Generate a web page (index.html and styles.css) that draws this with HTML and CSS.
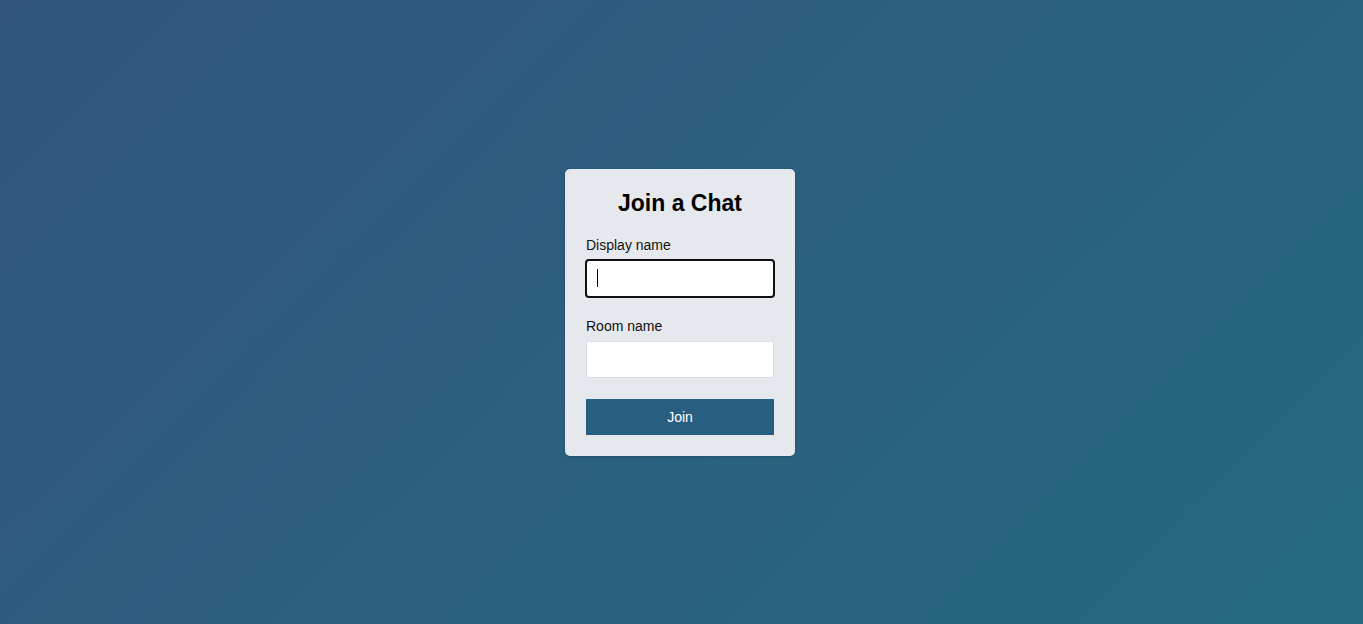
FILE: index.html
```html
<!DOCTYPE html>
<html>
<head>
    <title>Join a Chat</title>
    <link rel="stylesheet" href="styles.css">
</head>
<body>
    <div class="join-card">
        <h2>Join a Chat</h2>
        <form id="join-form">
            <div class="field">
                <label for="display-name">Display name</label>
                <div class="input-wrap">
                    <input type="text" id="display-name" class="text-input" autofocus>
                    <span class="caret"></span>
                </div>
            </div>
            <div class="field">
                <label for="room-name">Room name</label>
                <input type="text" id="room-name" class="text-input">
            </div>
            <button type="submit" class="join-button">Join</button>
        </form>
    </div>
</body>
</html>
```

FILE: styles.css
```css
html {
    height: 100%;
}
body {
    font-family: "Liberation Sans", Arial, sans-serif;
    margin: 0;
    padding: 0;
    min-height: 100%;
    background: linear-gradient(135deg, #31557f, #266a80);
    display: flex;
    justify-content: center;
    align-items: center;
}
.join-card {
    width: 230px;
    box-sizing: border-box;
    padding: 21px 21px 21px;
    margin-right: 3px;
    background-color: #e5e9ed;
    border-radius: 5px;
    box-shadow: 0 1px 3px rgba(0, 0, 0, 0.2);
}
.join-card h2 {
    margin: 0 0 20px;
    font-size: 23px;
    text-align: center;
    color: #000;
}
.field {
    margin-bottom: 21px;
}
.field label {
    display: block;
    font-size: 14px;
    color: #111;
    margin-bottom: 7px;
}
.input-wrap {
    position: relative;
}
.caret {
    position: absolute;
    left: 11px;
    top: 9px;
    width: 1px;
    height: 18px;
    background-color: #000;
}
.text-input {
    display: block;
    width: 100%;
    height: 37px;
    box-sizing: border-box;
    padding: 0 10px;
    border: 1px solid #dadfe3;
    background-color: white;
    font-family: inherit;
    font-size: 14px;
    caret-color: transparent;
}
.text-input:focus {
    outline: 2px solid #101010;
    outline-offset: -1px;
    border-radius: 3px;
}
.join-button {
    display: block;
    width: 100%;
    height: 36px;
    border: none;
    background-color: #285f81;
    color: white;
    font-family: inherit;
    font-size: 14px;
    cursor: pointer;
}
.join-button:hover {
    background-color: #234f6c;
}
```
